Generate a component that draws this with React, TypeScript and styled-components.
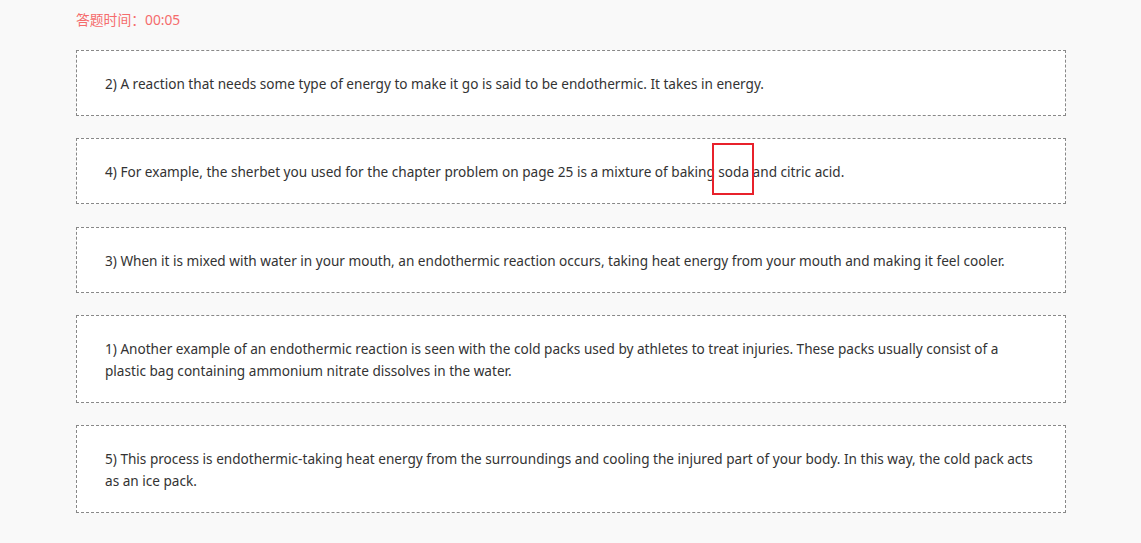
import React from "react";
import styled, { createGlobalStyle } from "styled-components";

const Global = createGlobalStyle`
  html, body { margin: 0; padding: 0; background: #f9f9f9; }
  body { font-family: "Noto Sans", "Noto Sans CJK SC", sans-serif; }
`;

const Page = styled.div`
  padding: 10px 75px 0 76px;
  display: flex;
  flex-direction: column;
`;

const Timer = styled.div`
  color: #f56c6c;
  font-size: 13.8px;
  line-height: 20px;
  height: 20px;
  margin-bottom: 20px;
`;

const List = styled.div`
  display: flex;
  flex-direction: column;
  gap: 22.3px;
  width: 990px;
`;

const Card = styled.div`
  background: #fff;
  border: 1px dashed #888;
  padding: 22px 28px 20px;
  font-size: 13.6px;
  line-height: 22px;
  color: #333;
`;

const Mark = styled.span`
  position: relative;
  &::after {
    content: "";
    position: absolute;
    left: -6px;
    right: -5px;
    top: -19px;
    bottom: -14px;
    border: 2px solid #e8212b;
  }
`;

const items: React.ReactNode[] = [
  "2) A reaction that needs some type of energy to make it go is said to be endothermic. It takes in energy.",
  <>
    4) For example, the sherbet you used for the chapter problem on page 25 is a mixture of baking <Mark>soda</Mark> and citric acid.
  </>,
  "3) When it is mixed with water in your mouth, an endothermic reaction occurs, taking heat energy from your mouth and making it feel cooler.",
  "1) Another example of an endothermic reaction is seen with the cold packs used by athletes to treat injuries. These packs usually consist of a plastic bag containing ammonium nitrate dissolves in the water.",
  "5) This process is endothermic-taking heat energy from the surroundings and cooling the injured part of your body. In this way, the cold pack acts as an ice pack.",
];

export default function App() {
  return (
    <>
      <Global />
      <Page>
        <Timer>答题时间：00:05</Timer>
        <List>
          {items.map((it, i) => (
            <Card key={i}>{it}</Card>
          ))}
        </List>
      </Page>
    </>
  );
}
